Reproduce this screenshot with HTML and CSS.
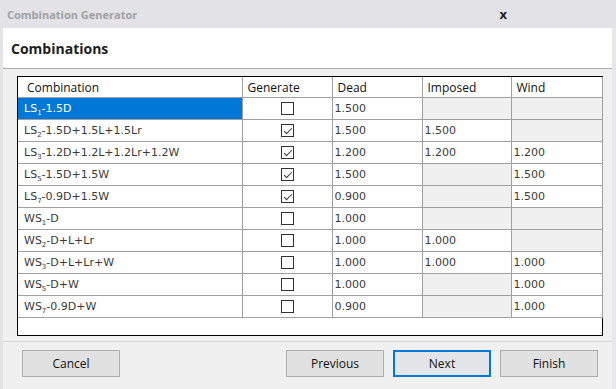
FILE: index.html
```html
<!DOCTYPE html>
<html>
<head>
<meta charset="utf-8">
<link rel="stylesheet" href="styles.css">
</head>
<body>
<div class="window">
  <div class="titlebar">
    <span class="title">Combination Generator</span>
    <span class="close">x</span>
  </div>
  <div class="header">Combinations</div>
  <div class="content">
    <div class="gridbox">
      <table class="grid">
        <colgroup>
          <col class="c1"><col class="c2"><col class="c3"><col class="c4"><col class="c5">
        </colgroup>
        <thead>
          <tr><th>Combination</th><th>Generate</th><th>Dead</th><th>Imposed</th><th>Wind</th></tr>
        </thead>
        <tbody>
          <tr><td class="sel">LS<sub>1</sub>-1.5D</td><td class="cb"><span class="box"></span></td><td>1.500</td><td class="dis"></td><td class="dis"></td></tr>
          <tr><td>LS<sub>2</sub>-1.5D+1.5L+1.5Lr</td><td class="cb"><span class="box checked"></span></td><td>1.500</td><td>1.500</td><td class="dis"></td></tr>
          <tr><td>LS<sub>3</sub>-1.2D+1.2L+1.2Lr+1.2W</td><td class="cb"><span class="box checked"></span></td><td>1.200</td><td>1.200</td><td>1.200</td></tr>
          <tr><td>LS<sub>5</sub>-1.5D+1.5W</td><td class="cb"><span class="box checked"></span></td><td>1.500</td><td class="dis"></td><td>1.500</td></tr>
          <tr><td>LS<sub>7</sub>-0.9D+1.5W</td><td class="cb"><span class="box checked"></span></td><td>0.900</td><td class="dis"></td><td>1.500</td></tr>
          <tr><td>WS<sub>1</sub>-D</td><td class="cb"><span class="box"></span></td><td>1.000</td><td class="dis"></td><td class="dis"></td></tr>
          <tr><td>WS<sub>2</sub>-D+L+Lr</td><td class="cb"><span class="box"></span></td><td>1.000</td><td>1.000</td><td class="dis"></td></tr>
          <tr><td>WS<sub>3</sub>-D+L+Lr+W</td><td class="cb"><span class="box"></span></td><td>1.000</td><td>1.000</td><td>1.000</td></tr>
          <tr><td>WS<sub>5</sub>-D+W</td><td class="cb"><span class="box"></span></td><td>1.000</td><td class="dis"></td><td>1.000</td></tr>
          <tr><td>WS<sub>7</sub>-0.9D+W</td><td class="cb"><span class="box"></span></td><td>0.900</td><td class="dis"></td><td>1.000</td></tr>
        </tbody>
      </table>
    </div>
  </div>
  <div class="footer">
    <button class="btn">Cancel</button>
    <div class="spacer"></div>
    <button class="btn">Previous</button>
    <button class="btn default">Next</button>
    <button class="btn">Finish</button>
  </div>
</div>
</body>
</html>
```
FILE: styles.css
```css
html, body {
  margin: 0;
  padding: 0;
  width: 616px;
  height: 389px;
  overflow: hidden;
  background: #f0f0f0;
}
.window {
  width: 616px;
  height: 389px;
  box-sizing: border-box;
  border-left: 3px solid #e4e4e8;
  border-right: 4px solid #e8e8ec;
  background: #f0f0f0;
  display: flex;
  flex-direction: column;
  font-family: "Open Sans", "Noto Sans", sans-serif;
}
.titlebar {
  height: 28px;
  margin-left: -3px;
  margin-right: -4px;
  background: #e2e2e7;
  display: flex;
  align-items: center;
  padding-left: 7px;
  padding-right: 109px;
  box-sizing: border-box;
}
.title {
  font-size: 11px;
  font-weight: 700;
  color: #a0a0a4;
  flex: 1;
}
.close {
  font-size: 13px;
  font-weight: 700;
  color: #222;
}
.header {
  height: 40px;
  background: #fff;
  border-bottom: 1px solid #a9a9a9;
  display: flex;
  align-items: center;
  padding-left: 8px;
  font-size: 14px;
  font-weight: 700;
  color: #1e1e1e;
}
.content {
  padding: 7px 9px 0 14px;
}
.gridbox {
  height: 258px;
  border: 1px solid #000;
  background: #fff;
}
.grid {
  border-collapse: collapse;
  table-layout: fixed;
  width: 584px;
  font-family: "DejaVu Sans", Tahoma, sans-serif;
  font-size: 11px;
  color: #3a3a3a;
}
.c1 { width: 224px; }
.c2 { width: 90px; }
.c3 { width: 90px; }
.c4 { width: 89px; }
.c5 { width: 91px; }
.grid th {
  height: 20px;
  padding: 0 0 0 5px;
  text-align: left;
  font-family: "Open Sans", "Noto Sans", sans-serif;
  font-weight: 400;
  font-size: 12px;
  color: #111;
  border: 1px solid #a0a0a0;
  border-top: none;
  white-space: nowrap;
}
.grid th:first-child { padding-left: 9px; }
.grid td {
  height: 21px;
  padding: 0 0 0 2px;
  border: 1px solid #a0a0a0;
  white-space: nowrap;
}
.grid td:first-child { padding-left: 6px; }
.grid tr > :first-child { border-left: none; }
.grid sub {
  font-size: 7px;
  vertical-align: -3px;
  line-height: 0;
}
.grid td.sel {
  background: #0078d7;
  color: #fff;
}
.grid td.dis {
  background: #f0f0f0;
}
.grid td.cb {
  padding: 0;
  text-align: center;
}
.box {
  display: inline-block;
  width: 11px;
  height: 11px;
  border: 1px solid #333;
  background: #fff;
  vertical-align: middle;
  position: relative;
}
.box.checked::after {
  content: "";
  position: absolute;
  left: 2px;
  top: 1px;
  width: 7px;
  height: 3px;
  border-left: 1px solid #333;
  border-bottom: 1px solid #333;
  transform: translate(0, 2px) rotate(-45deg);
}
.footer {
  margin-top: 5px;
  border-top: 1px solid #d6d6d6;
  padding: 8px 14px 0 19px;
  display: flex;
  gap: 9px;
}
.spacer { flex: 1; }
.btn {
  width: 98px;
  height: 27px;
  box-sizing: border-box;
  background: #e1e1e1;
  border: 1px solid #adadad;
  font-family: "Open Sans", "Noto Sans", sans-serif;
  font-size: 12px;
  color: #111;
  padding: 0;
}
.btn.default {
  border: 2px solid #0078d7;
  background: #e3e5e8;
}
```
